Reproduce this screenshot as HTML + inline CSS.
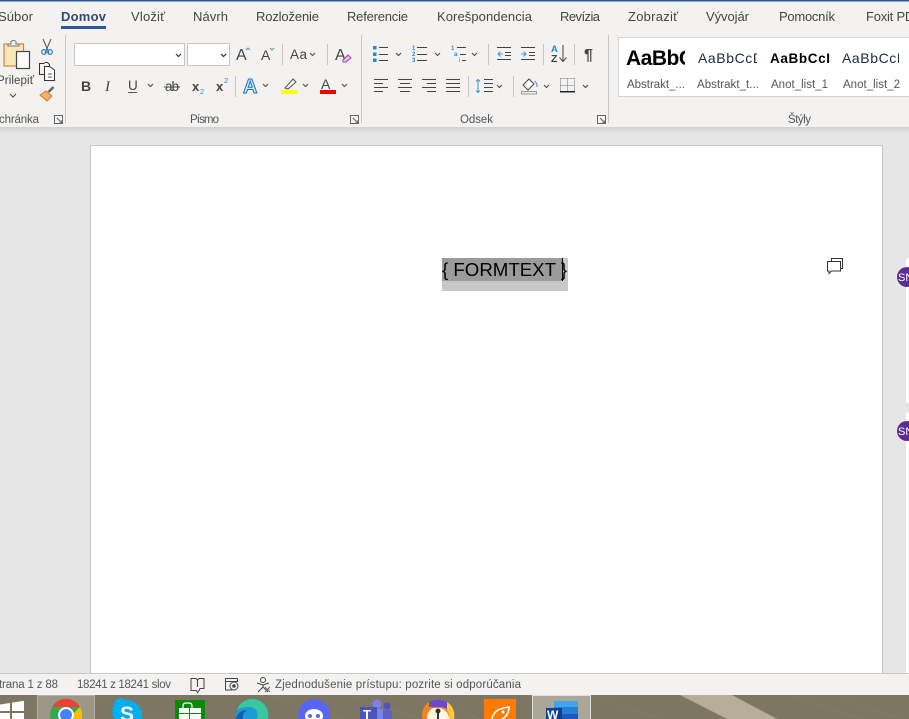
<!DOCTYPE html>
<html><head><meta charset="utf-8"><style>
html,body{margin:0;padding:0;width:909px;height:719px;overflow:hidden;background:#e6e6e6}
svg{display:block}
text{font-family:"Liberation Sans",sans-serif;fill:#444}
.tab{font-size:13px;fill:#444}
.sm{font-size:11.5px;fill:#555}
.st{font-size:11.5px;fill:#555}
.i{fill:none;stroke:#444;stroke-width:1}
.b{fill:none;stroke:#3a96dd;stroke-width:1}
.c{fill:none;stroke:#555;stroke-width:1.2}
</style></head><body>
<svg width="909" height="719" viewBox="0 0 909 719" xmlns="http://www.w3.org/2000/svg">
<defs><linearGradient id="sh" x1="0" y1="0" x2="0" y2="1"><stop offset="0" stop-color="#d0d0d0"/><stop offset="1" stop-color="#e6e6e6"/></linearGradient></defs>
<rect width="909" height="719" fill="#e6e6e6"/>
<!-- page -->
<rect x="90.5" y="145.5" width="792" height="540" fill="#fff" stroke="#c6c6c6"/>
<!-- ribbon -->
<rect width="909" height="127" fill="#f3f2f1"/>
<rect y="127" width="909" height="6" fill="url(#sh)"/>
<rect width="909" height="1.5" fill="#2b579a"/>
<!-- tabs -->
<text class="tab" x="-2" y="21" textLength="35">Súbor</text>
<text class="tab" x="61" y="21" textLength="45" style="font-weight:700;fill:#2f4a75">Domov</text>
<rect x="61" y="26" width="45" height="3" fill="#2b579a"/>
<text class="tab" x="131" y="21" textLength="34">Vložiť</text>
<text class="tab" x="193" y="21" textLength="35">Návrh</text>
<text class="tab" x="256" y="21" textLength="63">Rozloženie</text>
<text class="tab" x="347" y="21" textLength="61">Referencie</text>
<text class="tab" x="437" y="21" textLength="95">Korešpondencia</text>
<text class="tab" x="560" y="21" textLength="40">Revízia</text>
<text class="tab" x="628" y="21" textLength="50">Zobraziť</text>
<text class="tab" x="706" y="21" textLength="43">Vývojár</text>
<text class="tab" x="779" y="21" textLength="56">Pomocník</text>
<text class="tab" x="866" y="21" textLength="56">Foxit PDF</text>
<!-- separators -->
<g fill="#c8c6c4"><rect x="65" y="35" width="1" height="88"/><rect x="361" y="35" width="1" height="88"/><rect x="608" y="35" width="1" height="88"/>
<rect x="282" y="44" width="1" height="21"/><rect x="327" y="44" width="1" height="21"/><rect x="235" y="76" width="1" height="21"/>
<rect x="488" y="44" width="1" height="21"/><rect x="543" y="44" width="1" height="21"/><rect x="574" y="44" width="1" height="21"/>
<rect x="468" y="76" width="1" height="21"/><rect x="513" y="76" width="1" height="21"/></g>
<!-- clipboard -->
<rect x="4" y="44" width="19.5" height="22" fill="#fbe6b8" stroke="#d9822b" stroke-width="1.2"/>
<path d="M8 46v-2h3v-2.500q2.500-2 5 0V44h3v2z" fill="#f3f2f1" stroke="#777"/>
<rect x="16.500" y="51.500" width="13" height="17" fill="#fafafa" stroke="#444" stroke-width="1.200"/>
<text class="sm" x="-3" y="84" textLength="37" style="fill:#444">Prilepiť</text>
<path d="M10 94l3 3 3-3" class="i"/>
<path d="M43 39l6 14M51 39l-6 14" stroke="#555" fill="none"/>
<circle cx="44" cy="52" r="2.300" fill="none" stroke="#2b88d8" stroke-width="1.300"/><circle cx="50" cy="52" r="2.300" fill="none" stroke="#2b88d8" stroke-width="1.300"/>
<path d="M44.500 63.500h-5v11h5" fill="none" stroke="#333"/>
<path d="M44.500 63.500h3l2 2v2M44.500 67.500h5l5 3.500v10.500h-10z" fill="#fff" stroke="#333" transform="translate(0,-1)"/>
<path d="M48 74h4M48 77h4" stroke="#555"/>
<path d="M53.500 87l-5 5" stroke="#666" stroke-width="2.500"/>
<path d="M40 95l6-4 6 5-5 5z" fill="#f6b26b" stroke="#d9782b"/>
<text class="sm" x="-1" y="123" textLength="40">chránka</text>
<path d="M54.500 115.500h8v8h-8zM57 118l5 5M62 120v3h-3" fill="none" stroke="#666"/>
<!-- font boxes -->
<rect x="74.500" y="43.500" width="110" height="22" fill="#fff" stroke="#c8c6c4"/>
<rect x="187.500" y="43.500" width="42" height="22" fill="#fff" stroke="#c8c6c4"/>
<path d="M176 54l2.500 2.500 2.500-2.500M221 54l2.500 2.500 2.500-2.500" fill="none" stroke="#333" stroke-width="1.200"/>
<text x="236" y="60" style="font-size:16px" textLength="11">A</text><path d="M246 50l2-2 2 2" class="b"/>
<text x="261" y="60" style="font-size:14px" textLength="9">A</text><path d="M270 48l2 2 2-2" class="b"/>
<text x="290" y="59" style="font-size:13.500px" textLength="17">Aa</text><path d="M310 53l2.500 2.500 2.500-2.500" class="c"/>
<text x="335" y="60" style="font-size:16px" textLength="10">A</text><path d="M343 60l5-5 3 3-5 4h-3z" fill="#e9bfe9" stroke="#a64ca6"/>
<!-- format row -->
<text x="81" y="91" style="font-size:14px;font-weight:700" textLength="9.500">B</text>
<text x="105" y="91" style="font-size:15px;font-family:'Liberation Serif',serif;font-style:italic" textLength="6">I</text>
<text x="128" y="90" style="font-size:13.500px" textLength="9">U</text><rect x="128" y="92" width="9" height="1" fill="#555"/>
<path d="M148 84l2.500 2.500 2.500-2.500" class="c"/>
<text x="165" y="91" style="font-size:13.500px" textLength="14">ab</text><rect x="164" y="86.500" width="16" height="1" fill="#444"/>
<text x="192" y="91" style="font-size:13px;font-weight:700" textLength="8">x</text><text x="200" y="94" style="font-size:7.500px;fill:#2b88d8">2</text>
<text x="216" y="91" style="font-size:13px;font-weight:700" textLength="8">x</text><text x="224" y="83" style="font-size:7.500px;fill:#2b88d8">2</text>
<text x="243" y="93" style="font-size:20px;font-weight:700;fill:#cfe6f9;stroke:#1a73c9;stroke-width:1" textLength="15">A</text>
<path d="M263 84l2.500 2.500 2.500-2.500" class="c"/>
<path d="M285 88l8-9 3 3-8 7z" fill="none" stroke="#555"/><rect x="281" y="90" width="16" height="4" fill="#ffff00"/>
<path d="M303 84l2.500 2.500 2.500-2.500" class="c"/>
<text x="321" y="89" style="font-size:14px" textLength="12">A</text><rect x="320" y="90" width="16" height="4" fill="#f00000"/>
<path d="M342 84l2.500 2.500 2.500-2.500" class="c"/>
<text x="190" y="123" class="sm" textLength="29">Písmo</text>
<path d="M350.500 115.500h8v8h-8zM353 118l5 5M358 120v3h-3" fill="none" stroke="#666"/>
<!-- paragraph row 1 -->
<g fill="#2b88d8"><rect x="373" y="46" width="3.500" height="3.500"/><rect x="373" y="52.500" width="3.500" height="3.500"/><rect x="373" y="58.500" width="3.500" height="3.500"/></g>
<path d="M379 47.500h9M379 54.500h9M379 60.500h9" class="i"/>
<path d="M396 53l2.500 2.500 2.500-2.500M435 53l2.500 2.500 2.500-2.500M472 53l2.500 2.500 2.500-2.500" class="c"/>
<text x="412" y="50" style="font-size:6px;font-weight:700;fill:#2b88d8">1</text><text x="412" y="56" style="font-size:6px;font-weight:700;fill:#2b88d8">2</text><text x="412" y="62" style="font-size:6px;font-weight:700;fill:#2b88d8">3</text>
<path d="M417 47.500h10M417 54.500h10M417 60.500h10" class="i"/>
<text x="451" y="50" style="font-size:6px;font-weight:700;fill:#2b88d8">1</text><text x="454" y="56" style="font-size:6px;font-weight:700;fill:#2b88d8">a</text><text x="459" y="62" style="font-size:6px;fill:#2b88d8">i</text>
<path d="M457 47.500h9M460 54.500h6M462 60.500h4" class="i"/>
<path d="M497 47.500h14M505 52.500h6M505 55.500h6M497 59.500h14" class="i"/><path d="M503 54h-5M500.500 51.500l-2.500 2.500 2.500 2.500" class="b"/>
<path d="M521 47.500h14M529 52.500h6M529 55.500h6M521 59.500h14" class="i"/><path d="M521 54h5M523.500 51.500l2.500 2.500-2.500 2.500" class="b"/>
<text x="551" y="52" style="font-size:9.500px;font-weight:700;fill:#2b88d8" textLength="7">A</text>
<text x="551" y="62" style="font-size:10.500px;font-weight:700" textLength="7">Z</text>
<path d="M563 45v16M559.500 57.500l3.500 4 3.500-4" stroke="#444" fill="none"/>
<text x="584" y="60" style="font-size:16px;font-weight:700" textLength="10">¶</text>
<!-- paragraph row 2 -->
<path d="M374 79.500h14M374 83.500h9M374 87.500h14M374 91.500h9" class="i"/>
<path d="M398 79.500h14M400 83.500h10M398 87.500h14M400 91.500h10" class="i"/>
<path d="M422 79.500h14M427 83.500h9M422 87.500h14M427 91.500h9" class="i"/>
<path d="M446 79.500h14M446 83.500h14M446 87.500h14M446 91.500h14" class="i"/>
<path d="M478 80v12M476 81.500l2-2 2 2M476 90.500l2 2 2-2" class="b"/><path d="M484 79.500h9M484 83.500h9M484 87.500h9M484 91.500h9" class="i"/>
<path d="M497 85l2.500 2.500 2.500-2.500M544 85l2.500 2.500 2.500-2.500M583 85l2.500 2.500 2.500-2.500" class="c"/>
<path d="M529 79l-6 6 5 5 6-6z" fill="#fff" stroke="#444"/><rect x="521.500" y="91.500" width="15" height="2.500" fill="#f3f2f1" stroke="#999"/><path d="M535 81l2 3v3" stroke="#2b88d8" fill="none"/>
<path d="M560.500 78.500h14M560.500 85.500h14M567.500 78.500v13M560.500 78.500v13M574.500 78.500v13" fill="none" stroke="#777" stroke-dasharray="1 1"/><rect x="560" y="91" width="15" height="1.500" fill="#222"/>
<text x="460" y="123" class="sm" textLength="33">Odsek</text>
<path d="M597.500 115.500h8v8h-8zM600 118l5 5M605 120v3h-3" fill="none" stroke="#666"/>
<!-- styles -->
<rect x="618.500" y="37.500" width="291" height="59" fill="#fff" stroke="#d4d4d4"/>
<svg x="626" y="40" width="59" height="30"><text x="0" y="25" style="font-size:21px;font-weight:700;fill:#000" textLength="68">AaBbC</text></svg>
<svg x="698" y="40" width="59" height="30"><text x="0" y="23" style="font-size:14px;fill:#1a2a45" textLength="65">AaBbCcD</text></svg>
<svg x="770" y="40" width="60" height="30"><text x="0" y="23" style="font-size:13.500px;font-weight:700;fill:#000" textLength="60">AaBbCcI</text></svg>
<svg x="842" y="40" width="57" height="30"><text x="0" y="23" style="font-size:14px;fill:#1a2a45" textLength="65">AaBbCcD</text></svg>
<text class="sm" x="627" y="88" textLength="58">Abstrakt_...</text>
<text class="sm" x="697" y="88" textLength="62">Abstrakt_t...</text>
<text class="sm" x="771" y="88" textLength="57">Anot_list_1</text>
<text class="sm" x="843" y="88" textLength="57">Anot_list_2</text>
<text class="sm" x="788" y="123" textLength="23">Štýly</text>
<!-- field -->
<rect x="442" y="258" width="126" height="33" fill="#c8c8c8"/>
<rect x="442" y="258" width="120" height="23" fill="#9b9b9b"/>
<rect x="562" y="258" width="6" height="23" fill="#c8c8c8"/>
<text x="442" y="276" style="font-size:18.670px;fill:#000">{ FORMTEXT }</text>
<rect x="562" y="258" width="1" height="23" fill="#000"/>
<!-- comment icon -->
<path d="M831.500 261.500v-3h11v10h-2" fill="#fff" stroke="#333"/>
<path d="M827.500 261.500h13v9.500h-9l-2.500 2.500v-2.500h-1.500z" fill="#fff" stroke="#333"/>
<!-- comment panels -->
<rect x="906" y="258" width="4" height="145" rx="2" fill="#fff"/>
<rect x="906" y="413" width="4" height="262" fill="#fff"/>
<circle cx="907" cy="277" r="10" fill="#5c2d91"/><text x="898" y="281" style="font-size:11px;fill:#fff">SN</text>
<circle cx="907" cy="431" r="10" fill="#5c2d91"/><text x="898" y="435" style="font-size:11px;fill:#fff">SN</text>
<!-- status bar -->
<rect y="673" width="909" height="22" fill="#f3f2f1"/>
<rect y="673" width="909" height="1" fill="#c8c8c8"/>
<text class="st" x="-1" y="688" textLength="59">trana 1 z 88</text>
<text class="st" x="77" y="688" textLength="94">18241 z 18241 slov</text>
<path d="M191 678.500h5l1.500 1.500 1.500-1.500h5v10h-4l-1 2-1.500 2-1-2h-5.500zM197.500 680v7" fill="none" stroke="#444"/>
<path d="M225.500 678.500h12v3h-12zM225.500 681v9h7" fill="none" stroke="#444"/><circle cx="234" cy="686" r="4" fill="#f3f2f1" stroke="#444"/><circle cx="234" cy="686" r="1.800" fill="#444"/>
<circle cx="263" cy="680" r="2.500" fill="none" stroke="#444"/><path d="M257 683l6 2 6-2M263 685v2l-5 5M263 687l5 5" fill="none" stroke="#444"/><path d="M265 687l5 5M270 687l-5 5" stroke="#666"/>
<text class="st" x="275" y="688" textLength="246">Zjednodušenie prístupu: pozrite si odporúčania</text>
<!-- taskbar -->
<rect y="695" width="909" height="24" fill="#7c7663"/>
<g stroke="#86806d" stroke-width="1" opacity=".5"><path d="M0 700l60 19M100 697l70 22M270 696l70 23M350 696l70 23M420 697l60 22M600 697l60 22M790 696l70 23M840 697l60 22"/></g>
<polygon points="680,695 732,695 777,719 727,719" fill="#b6ae98"/>
<!-- windows -->
<path d="M0 704.500l10-1.500v8h-10zM12 702.600l12-1.800v10.200h-12zM0 713h10v6h-10zM12 713h12v6h-12z" fill="#fff"/>
<!-- chrome -->
<rect x="37.500" y="695.500" width="57" height="24" fill="#9c9686" stroke="#b6b1a3"/>
<circle cx="66" cy="715" r="16" fill="#34a853"/>
<path d="M52 707a16 16 0 0 1 28 0h-14z" fill="#ea4335"/>
<path d="M80 707a16 16 0 0 1 2 8v4h-8l-2-4z" fill="#fbbc05"/>
<circle cx="66" cy="715" r="8" fill="#fff"/><circle cx="66" cy="715" r="6" fill="#4285f4"/>
<!-- skype -->
<path d="M113 707a8 8 0 0 1 13-7a16 16 0 0 1 16 19h-28a16 16 0 0 1-1-12z" fill="#00aff0"/>
<text x="120" y="721" style="font-size:21px;font-weight:700;fill:#fff">S</text>
<!-- store -->
<rect x="175" y="700" width="30" height="19" fill="#0a8a0a"/>
<path d="M183 708v-2q0-3 3-3h3q3 0 3 3v2" fill="none" stroke="#fff" stroke-width="1.200"/>
<rect x="179" y="708" width="22" height="11" fill="#fff"/><path d="M189.500 708v11M179 713.500h22" stroke="#0a8a0a"/>
<!-- edge -->
<circle cx="252" cy="715" r="16" fill="#1f9ad6"/>
<path d="M237 710a16 16 0 0 1 30-1a16 16 0 0 1 1 10h-12c4-6 0-12-7-12c-5 0-9 1-12 3z" fill="#37c8a0"/>
<path d="M236 719c1-6 6-9 11-9c-3 2-5 5-4 9z" fill="#0f5fb0"/>
<!-- discord -->
<circle cx="314" cy="715" r="16" fill="#5865f2"/>
<ellipse cx="314" cy="716" rx="9" ry="7" fill="#fff"/>
<circle cx="310" cy="716" r="2" fill="#5865f2"/><circle cx="318" cy="716" r="2" fill="#5865f2"/>
<!-- teams -->
<circle cx="377" cy="704" r="4.500" fill="#7b83eb"/><circle cx="387" cy="706" r="3.500" fill="#4b53bc"/>
<rect x="371" y="709" width="12" height="10" fill="#7b83eb"/><rect x="383" y="710" width="9" height="9" fill="#5b62c4"/>
<rect x="360" y="707" width="17" height="12" fill="#4b53bc"/>
<text x="363" y="719" style="font-size:13px;font-weight:700;fill:#fff">T</text>
<!-- shield app -->
<circle cx="438" cy="715" r="16" fill="#f58220"/>
<path d="M429 702a16 16 0 0 1 18 0l6 8-12-3h-12z" fill="#6a4bd0"/>
<path d="M427 719a11 11 0 0 1 6-11h6a11 11 0 0 1 10 11z" fill="#fdf6e0"/>
<path d="M447 702a16 16 0 0 1 7 17h-5a12 12 0 0 0-2-9z" fill="#ffc83d"/>
<circle cx="438" cy="711" r="2.500" fill="#333"/><rect x="437" y="712" width="2" height="7" fill="#333"/>
<!-- rocket -->
<rect x="484" y="699" width="32" height="20" fill="#ff7a00"/>
<path d="M492 719q1-6 6-9q4-2 11-3q0 6-4 10l-3 2" fill="none" stroke="#fff" stroke-width="1.600"/><circle cx="503" cy="712" r="1.500" fill="#fff"/>
<!-- word -->
<rect x="532.500" y="695.500" width="58" height="24" fill="#aaa698" stroke="#e3e1da"/>
<rect x="554" y="701" width="24" height="6" fill="#41a5ee"/>
<rect x="554" y="707" width="24" height="7" fill="#2b7cd3"/>
<rect x="554" y="714" width="24" height="5" fill="#185abd"/>
<rect x="546" y="708" width="16" height="11" fill="#103f91"/>
<text x="547" y="719" style="font-size:12px;font-weight:700;fill:#fff">W</text>
</svg>
</body></html>
